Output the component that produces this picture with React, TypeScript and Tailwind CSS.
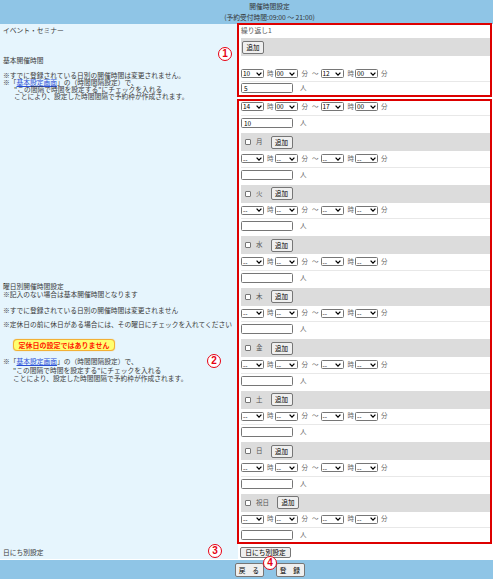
import React from 'react';

const days = ['月', '火', '水', '木', '金', '土', '日', '祝日'];

function Sel({ v }: { v: string }) {
  return (
    <span className="inline-flex h-[9px] w-[23px] shrink-0 items-center justify-between rounded-[1.5px] border border-[#767676] bg-white pl-[1px] pr-[1.5px] text-[6.5px] leading-none text-black">
      <span>{v}</span>
      <svg width="6" height="4" viewBox="0 0 6 4">
        <path d="M0.6 0.6 L3 3.1 L5.4 0.6" fill="none" stroke="#000" strokeWidth="1.3" />
      </svg>
    </span>
  );
}

function TimeRow({ a, b, c, d }: { a: string; b: string; c: string; d: string }) {
  return (
    <div className="flex items-center text-[6.5px] text-[#666]">
      <Sel v={a} />
      <span className="ml-[3px] mr-[1px]">時</span>
      <Sel v={b} />
      <span className="ml-[4px]">分</span>
      <span className="ml-[4px] mr-[2px]">～</span>
      <Sel v={c} />
      <span className="ml-[4px] mr-[1px]">時</span>
      <Sel v={d} />
      <span className="ml-[3px]">分</span>
    </div>
  );
}

function Count({ v }: { v?: string }) {
  return (
    <div className="flex items-center text-[6.5px] text-[#666]">
      <input
        readOnly
        value={v ?? ''}
        className="h-[10px] w-[52px] rounded-[1.5px] border border-[#767676] bg-white px-[2px] text-[6.5px] leading-none text-black outline-none"
      />
      <span className="ml-[7px]">人</span>
    </div>
  );
}

function AddBtn() {
  return (
    <button className="h-[13px] w-[22px] shrink-0 rounded-[2px] border border-[#767676] bg-[#efefef] text-[6.5px] leading-none text-black">
      追加
    </button>
  );
}

function Mark({ n, pos }: { n: string; pos: string }) {
  return (
    <span
      className={`absolute flex h-[14px] w-[14px] items-center justify-center rounded-full border-[1.5px] border-[#e60012] bg-white font-['Liberation_Sans',sans-serif] text-[10px] font-bold leading-none text-[#e60012] ${pos}`}
    >
      {n}
    </span>
  );
}

export default function App() {
  return (
    <div className="relative h-[579px] w-[493px] overflow-hidden bg-white font-['Noto_Sans_CJK_JP','Noto_Sans',sans-serif] text-[6.75px] text-[#3a3a3a]">
      {/* header */}
      <div className="flex h-[24px] flex-col items-center bg-[#8fc5e6] pl-[46px] pt-[1px] leading-[11px] text-[#333]">
        <div>開催時間設定</div>
        <div>(予約受付時間:09:00 ～ 21:00)</div>
      </div>

      {/* row: event */}
      <div className="flex h-[13px]">
        <div className="flex w-[238px] items-center bg-[#e6f5fd] px-[3px]">イベント・セミナー</div>
        <div className="flex flex-1 items-center px-[3px] text-[#555]">繰り返し1</div>
      </div>

      {/* row: basic hours */}
      <div className="flex h-[96px]">
        <div className="w-[238px] bg-[#e6f5fd] px-[3px] pt-[19px]">
          <div className="leading-[8px]">基本開催時間</div>
          <div className="mt-[8px] leading-[7px]">
            <div>※すでに登録されている日別の開催時間は変更されません。</div>
            <div>
              ※「<span className="text-[#2a4fd6] underline">基本設定画面</span>」の（時間間隔設定）で、
            </div>
            <div className="pl-[11px]">"この間隔で時間を設定する"にチェックを入れる</div>
            <div className="pl-[11px]">ことにより、設定した時間間隔で予約枠が作成されます。</div>
          </div>
        </div>
        <div className="flex-1 px-[3px]">
          <div className="mt-[1px] flex h-[18px] items-center bg-[#dcdcdc] pl-[1px]">
            <AddBtn />
          </div>
          <div className="h-[10px]" />
          <div className="flex h-[16px] items-center border-b border-[#e8e8e8]">
            <TimeRow a="10" b="00" c="12" d="00" />
          </div>
          <div className="h-[16px] pt-[1px]">
            <Count v="5" />
          </div>
          <div className="flex h-[18px] items-center border-b border-[#e8e8e8]">
            <TimeRow a="14" b="00" c="17" d="00" />
          </div>
          <div className="h-[17px] pt-[2px]">
            <Count v="10" />
          </div>
        </div>
      </div>

      {/* row: weekday hours */}
      <div className="flex h-[412px]">
        <div className="w-[238px] whitespace-nowrap bg-[#e6f5fd] px-[3px] pt-[149px] leading-[8px]">
          <div>曜日別開催時間設定</div>
          <div>※記入のない場合は基本開催時間となります</div>
          <div className="mt-[8px]">※すでに登録されている日別の開催時間は変更されません</div>
          <div className="mt-[6px]">※定休日の前に休日がある場合には、その曜日にチェックを入れてください</div>
          <div className="ml-[10px] mt-[11px] flex h-[12px] w-[102px] items-center justify-center rounded-[4px] border border-[#f2b036] bg-[#ffff70] text-[7px] font-bold text-[#ff1a00] shadow-[0_0_1px_#f2b036]">
            定休日の設定ではありません
          </div>
          <div className="mt-[6px] leading-[8.5px]">
            <div>
              ※「<span className="text-[#2a4fd6] underline">基本設定画面</span>」の（時間間隔設定）で、
            </div>
            <div className="pl-[10px]">"この間隔で時間を設定する"にチェックを入れる</div>
            <div className="pl-[10px]">ことにより、設定した時間間隔で予約枠が作成されます。</div>
          </div>
        </div>
        <div className="flex-1 px-[3px]">
          {days.map((d) => (
            <div key={d}>
              <div className="flex h-[18px] items-center bg-[#dcdcdc] pl-[4px] text-[6.5px] text-[#555]">
                <span className="inline-block h-[6px] w-[6px] rounded-[1px] border border-[#767676] bg-white" />
                <span className="ml-[5px]">{d}</span>
                <span className="ml-[8px] flex">
                  <AddBtn />
                </span>
              </div>
              <div className="flex h-[16.5px] items-center border-b border-[#e8e8e8]">
                <TimeRow a="--" b="--" c="--" d="--" />
              </div>
              <div className="h-[17px] pt-[2px]">
                <Count />
              </div>
            </div>
          ))}
        </div>
      </div>

      {/* row: per date */}
      <div className="flex h-[14px]">
        <div className="flex w-[238px] items-center bg-[#e6f5fd] px-[3px]">日にち別設定</div>
        <div className="flex flex-1 items-center pl-[2px]">
          <button className="h-[11px] w-[51px] rounded-[2px] border border-[#767676] bg-[#efefef] text-[6.75px] leading-none text-black">
            日にち別設定
          </button>
        </div>
      </div>

      {/* footer */}
      <div className="mt-[1px] flex h-[20px] items-center justify-center gap-[12px] bg-[#8fc5e6] pl-[46px]">
        <button className="h-[14px] w-[29px] rounded-[2px] border border-[#767676] bg-[#efefef] text-[6.75px] leading-none text-black">
          戻　る
        </button>
        <button className="h-[14px] w-[29px] rounded-[2px] border border-[#767676] bg-[#efefef] text-[6.75px] leading-none text-black">
          登　録
        </button>
      </div>

      {/* annotation overlays */}
      <div className="pointer-events-none absolute left-[237px] top-[23px] h-[74px] w-[255px] border-2 border-[#dd0000]" />
      <div className="pointer-events-none absolute left-[237px] top-[99px] h-[445px] w-[255px] border-2 border-[#dd0000]" />
      <Mark n="1" pos="left-[218px] top-[47px]" />
      <Mark n="2" pos="left-[207px] top-[354px]" />
      <Mark n="3" pos="left-[208px] top-[544px]" />
      <Mark n="4" pos="left-[263px] top-[556px]" />
    </div>
  );
}
